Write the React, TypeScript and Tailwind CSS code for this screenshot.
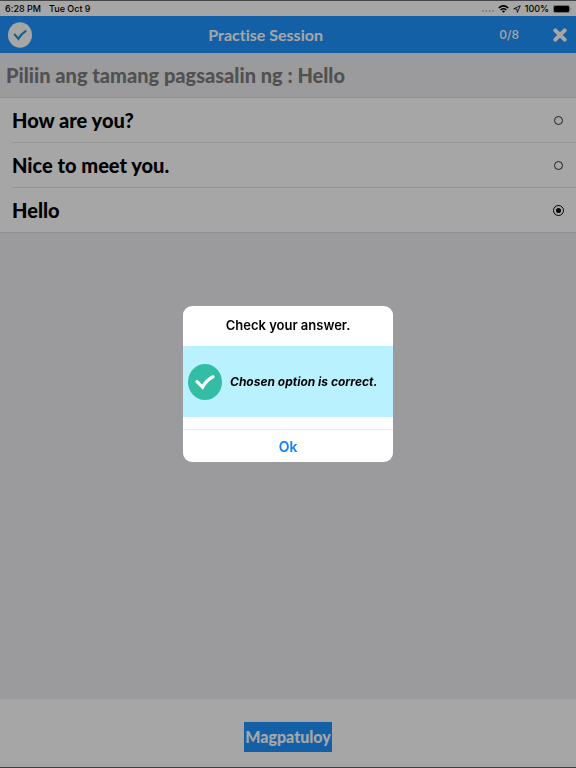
import React, { useState } from "react";

const options = ["How are you?", "Nice to meet you.", "Hello"];

const StatusBar: React.FC = () => (
  <div className="flex h-4 items-center justify-between border-t border-[#6a6a6e] bg-white pl-[5px] pr-1 font-['Inter','Liberation_Sans',sans-serif] text-[9px] leading-none font-medium text-black">
    <div className="flex gap-2">
      <span>6:28 PM</span>
      <span>Tue Oct 9</span>
    </div>
    <div className="flex items-center gap-1">
      <svg className="h-2 w-3" viewBox="0 0 12 8" fill="#8c8c8c">
        <circle cx="1" cy="6" r="0.8" />
        <circle cx="4.3" cy="6" r="0.8" />
        <circle cx="7.6" cy="6" r="0.8" />
        <circle cx="10.9" cy="6" r="0.8" />
      </svg>
      <svg className="h-2 w-[11px]" viewBox="0 0 11 8" fill="none" stroke="#000" strokeWidth="1.5">
        <path d="M0.7 3Q5.5 -1.2 10.3 3" />
        <path d="M2.6 5Q5.5 2.6 8.4 5" />
        <path d="M5.5 7.8L3.9 6.2Q5.5 5 7.1 6.2Z" fill="#000" stroke="none" />
      </svg>
      <svg className="h-2 w-2" viewBox="0 0 8 8" fill="none" stroke="#000" strokeWidth="0.8" strokeLinejoin="round">
        <path d="M7.3 0.7L0.7 3.8L4 4.1L4.3 7.4Z" />
      </svg>
      <span>100%</span>
      <svg className="h-2 w-[19px]" viewBox="0 0 19 8">
        <rect x="0.4" y="0.4" width="16.2" height="7.2" rx="2" fill="none" stroke="#777" strokeWidth="0.7" />
        <rect x="1" y="1" width="15" height="6" rx="1.2" />
        <path d="M17.6 2.7Q19 4 17.6 5.3Z" fill="#777" />
      </svg>
    </div>
  </div>
);

const Header: React.FC = () => (
  <header className="flex h-[37px] items-center justify-between bg-[#2094ff] pl-2 pr-[9px] text-white">
    <svg className="h-[26px] w-6" viewBox="0 0 24 26">
      <ellipse cx="12" cy="13" rx="12" ry="12.7" fill="#fff" />
      <path d="M6.8 12.6L10.4 16.8Q13 12.2 17.6 9.2" fill="none" stroke="#2094d8" strokeWidth="2.2" strokeLinecap="round" />
    </svg>
    <h1 className="text-[16px] leading-5 font-bold">Practise Session</h1>
    <div className="flex items-center justify-end gap-[34px]">
      <span className="font-['Inter','Liberation_Sans',sans-serif] text-[12px] leading-4 font-medium">0/8</span>
      <button type="button" aria-label="Close">
        <svg className="block h-[14px] w-[14px]" viewBox="0 0 14 14" stroke="#fff" strokeWidth="4" strokeLinecap="round">
          <path d="M2.3 2.3L11.7 11.7M11.7 2.3L2.3 11.7" />
        </svg>
      </button>
    </div>
  </header>
);

type OptionRowProps = {
  label: string;
  checked: boolean;
  onSelect: () => void;
};

const OptionRow: React.FC<OptionRowProps> = ({ label, checked, onSelect }) => (
  <label className="ml-3 flex h-[45px] items-center justify-between border-b border-[#e6e6e8] pr-3 last:h-11 last:border-b-0">
    <span className="text-[20px] leading-6 font-black text-black">{label}</span>
    <span className="grid size-[11px] place-items-center">
      <input
        type="radio"
        name="answer"
        checked={checked}
        onChange={onSelect}
        className="col-start-1 row-start-1 size-[9px] appearance-none rounded-full border border-[#333] checked:size-[11px] checked:border-black"
      />
      {checked && <span className="col-start-1 row-start-1 size-[5px] rounded-full bg-black" />}
    </span>
  </label>
);

const AnswerDialog: React.FC<{ onClose: () => void }> = ({ onClose }) => (
  <div className="fixed inset-0 flex items-center justify-center bg-black/35">
    <div
      role="dialog"
      aria-modal="true"
      aria-labelledby="dialog-title"
      className="w-[210px] overflow-hidden rounded-[9px] bg-white font-['Inter','Liberation_Sans',sans-serif]"
    >
      <h2 id="dialog-title" className="flex h-10 items-center justify-center text-[13px] font-semibold text-black">
        Check your answer.
      </h2>
      <div className="flex h-[71px] items-center gap-2 bg-[#baf1ff] pl-[5px]">
        <svg className="h-9 w-[34px] shrink-0" viewBox="0 0 34 36">
          <ellipse cx="17" cy="18" rx="17" ry="18" fill="#34bda5" />
          <path d="M9 17.6L14.6 23.2Q18.5 16 25 12.8" fill="none" stroke="#fff" strokeWidth="3.2" strokeLinecap="round" />
        </svg>
        <p className="whitespace-nowrap text-[12px] font-bold text-black italic">
          Chosen option is correct.
        </p>
      </div>
      <button
        type="button"
        onClick={onClose}
        className="mt-3 block h-[33px] w-full border-t border-[#ececec] text-[14px] font-semibold text-[#1283ff]"
      >
        Ok
      </button>
    </div>
  </div>
);

const App: React.FC = () => {
  const [answer, setAnswer] = useState("Hello");
  const [isDialogOpen, setIsDialogOpen] = useState(true);

  return (
    <div className="flex min-h-screen flex-col bg-[#efeff2] font-['Lato',sans-serif] [font-variant-ligatures:none]">
      <StatusBar />
      <Header />
      <main className="flex-1">
        <h2 className="flex h-11 items-center pl-[6px] text-[20px] leading-6 font-black text-[#7d7d7d]">
          Piliin ang tamang pagsasalin ng : Hello
        </h2>
        <div className="border-y border-[#dcdce0] bg-white">
          {options.map(option => (
            <OptionRow
              key={option}
              label={option}
              checked={answer === option}
              onSelect={() => setAnswer(option)}
            />
          ))}
        </div>
      </main>
      <footer className="flex h-[69px] justify-center border-b border-[#606064] bg-white pt-[23px]">
        <button
          type="button"
          onClick={() => setIsDialogOpen(true)}
          className="h-[30px] bg-[#2094ff] px-px text-[16px] leading-5 font-black text-white"
        >
          Magpatuloy
        </button>
      </footer>
      {isDialogOpen && <AnswerDialog onClose={() => setIsDialogOpen(false)} />}
    </div>
  );
};

export default App;
